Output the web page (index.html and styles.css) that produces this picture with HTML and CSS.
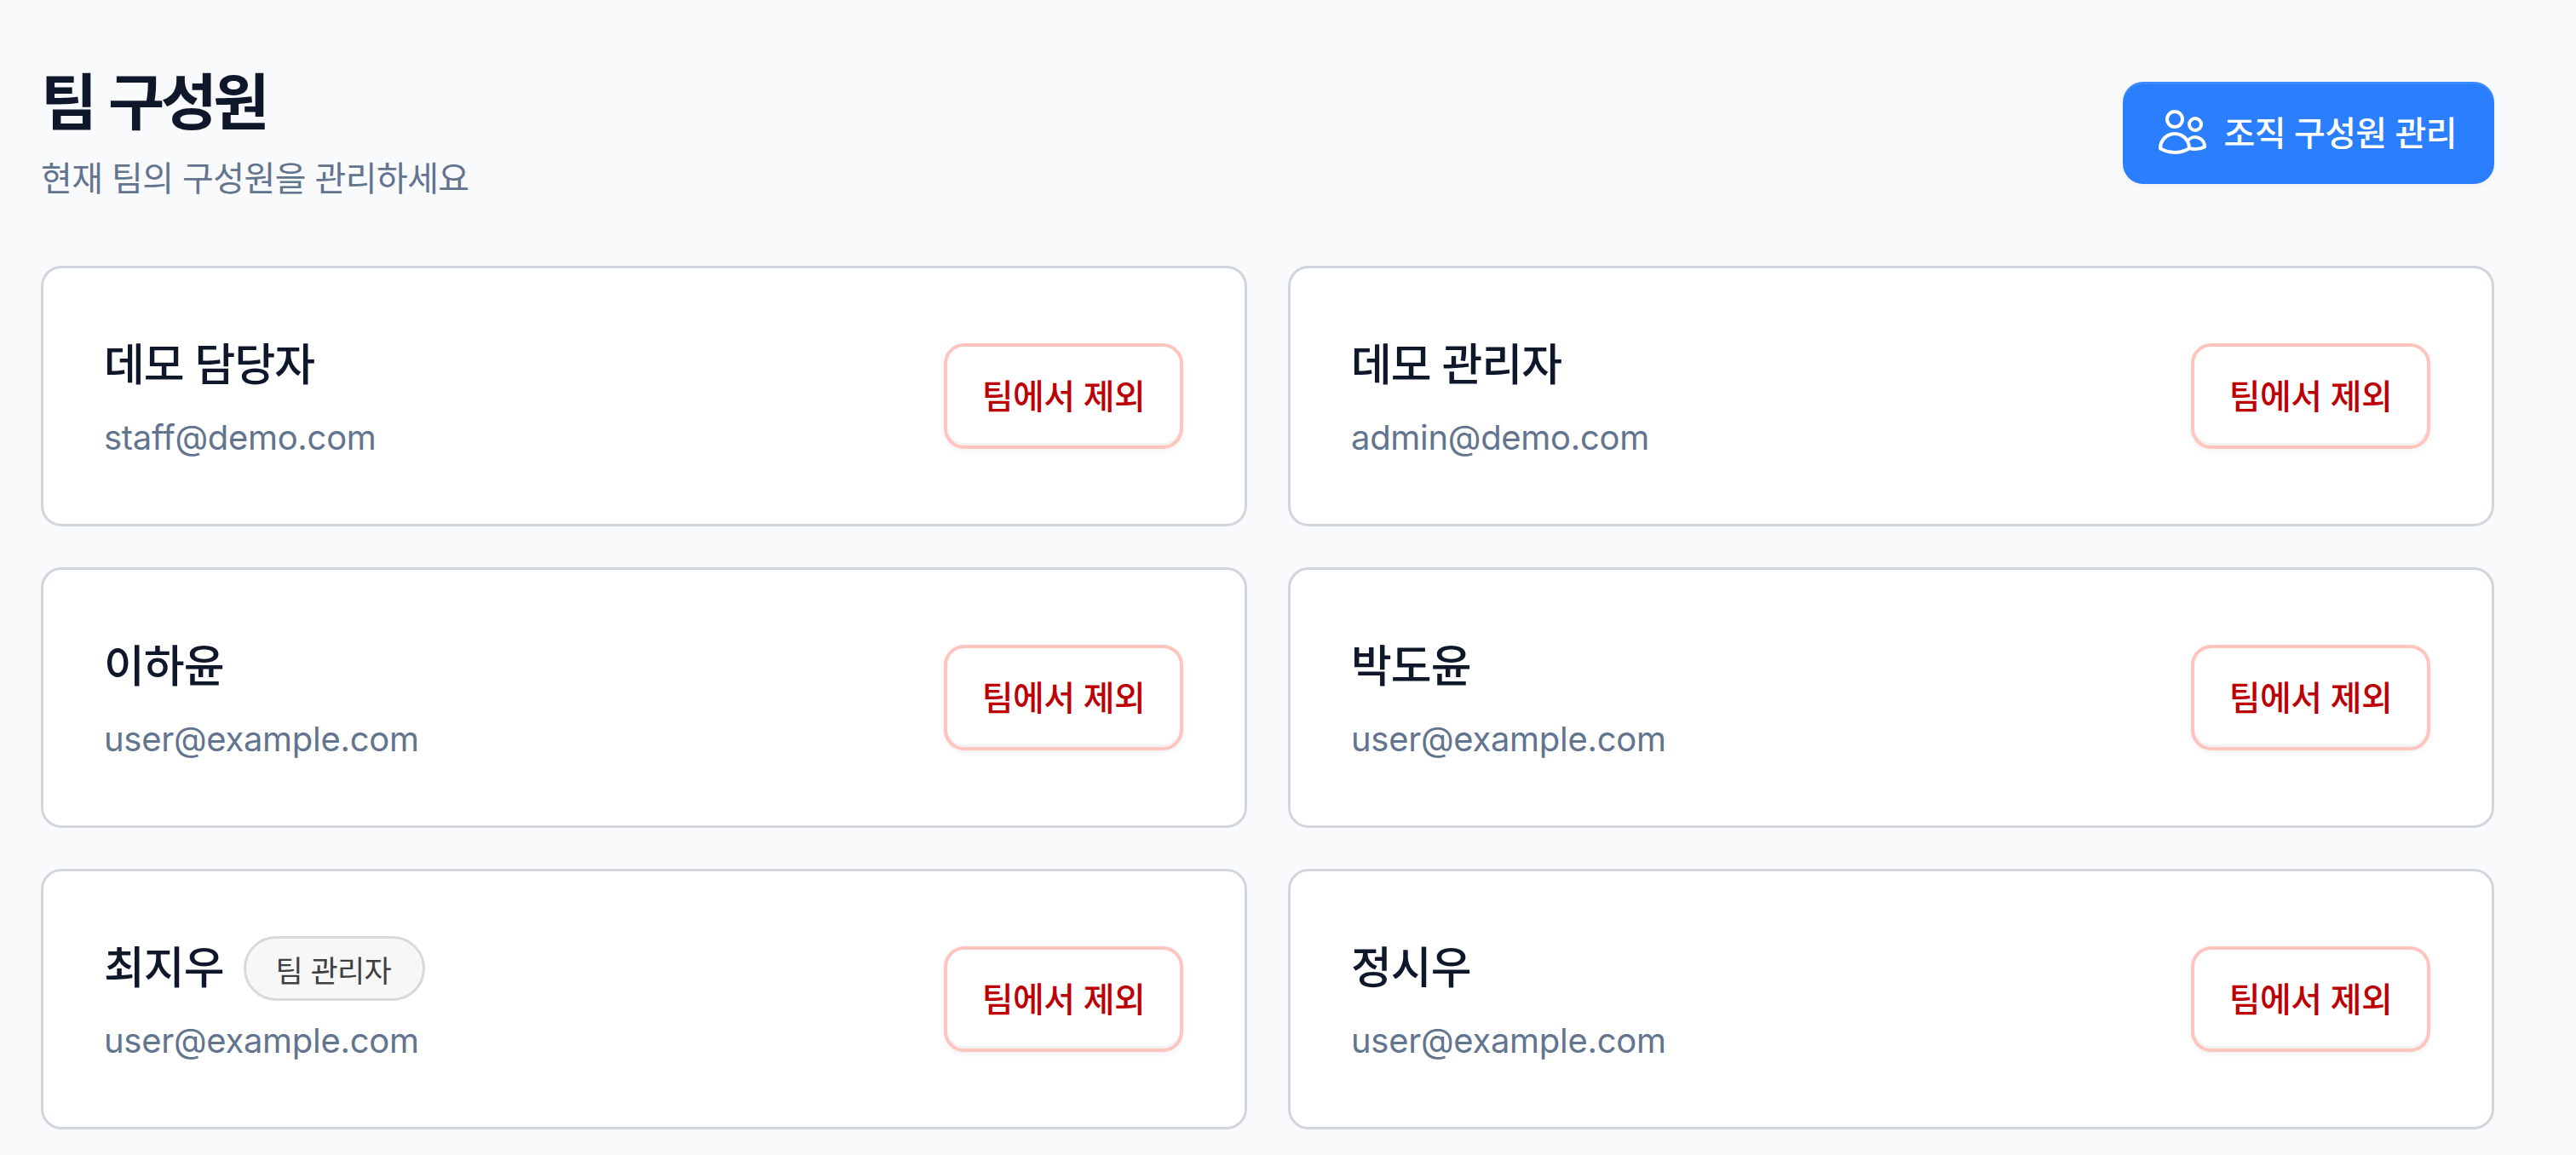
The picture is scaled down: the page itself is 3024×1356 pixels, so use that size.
FILE: index.html
```html
<!DOCTYPE html>
<html lang="ko">
<head>
    <meta charset="UTF-8">
    <meta name="viewport" content="width=device-width, initial-scale=1.0">
    <title>팀 구성원</title>
    <link rel="stylesheet" href="styles.css">
</head>
<body>
    <div class="container">
        <div class="header">
            <div>
                <h1>팀 구성원</h1>
                <p class="subtitle">현재 팀의 구성원을 관리하세요</p>
            </div>
            <button class="btn-primary">
                <svg class="icon" viewBox="0 0 24 24" fill="none" stroke="currentColor" stroke-width="1.5" stroke-linecap="round" stroke-linejoin="round">
                    <path d="M15 19.128a9.38 9.38 0 0 0 2.625.372 9.337 9.337 0 0 0 4.121-.952 4.125 4.125 0 0 0-7.533-2.493M15 19.128v-.003c0-1.113-.285-2.16-.786-3.07M15 19.128v.106A12.318 12.318 0 0 1 8.624 21c-2.331 0-4.512-.645-6.374-1.766l-.001-.109a6.375 6.375 0 0 1 11.964-3.07M12 6.375a3.375 3.375 0 1 1-6.75 0 3.375 3.375 0 0 1 6.75 0Zm8.25 2.25a2.625 2.625 0 1 1-5.25 0 2.625 2.625 0 0 1 5.25 0Z"/>
                </svg>
                조직 구성원 관리
            </button>
        </div>
        <div class="member-grid">
            <div class="card">
                <div class="member-info">
                    <div class="name-row"><span class="name">데모 담당자</span></div>
                    <div class="email">staff@demo.com</div>
                </div>
                <button class="btn-remove">팀에서 제외</button>
            </div>
            <div class="card">
                <div class="member-info">
                    <div class="name-row"><span class="name">데모 관리자</span></div>
                    <div class="email">admin@demo.com</div>
                </div>
                <button class="btn-remove">팀에서 제외</button>
            </div>
            <div class="card">
                <div class="member-info">
                    <div class="name-row"><span class="name">이하윤</span></div>
                    <div class="email">user@example.com</div>
                </div>
                <button class="btn-remove">팀에서 제외</button>
            </div>
            <div class="card">
                <div class="member-info">
                    <div class="name-row"><span class="name">박도윤</span></div>
                    <div class="email">user@example.com</div>
                </div>
                <button class="btn-remove">팀에서 제외</button>
            </div>
            <div class="card">
                <div class="member-info">
                    <div class="name-row"><span class="name">최지우</span><span class="badge">팀 관리자</span></div>
                    <div class="email">user@example.com</div>
                </div>
                <button class="btn-remove">팀에서 제외</button>
            </div>
            <div class="card">
                <div class="member-info">
                    <div class="name-row"><span class="name">정시우</span></div>
                    <div class="email">user@example.com</div>
                </div>
                <button class="btn-remove">팀에서 제외</button>
            </div>
        </div>
    </div>
</body>
</html>
```

FILE: styles.css
```css
:root {
    --bg-color: #f8fafc;
    --title-color: #0f172b;
    --muted-color: #62748e;
    --border-color: #d1d5dc;
}

body {
    font-family: Inter, "Noto Sans CJK KR", sans-serif;
    background: var(--bg-color);
    color: var(--title-color);
    margin: 0;
}

.container {
    padding: 72px 96px 30px 48px;
}

.header {
    display: flex;
    align-items: center;
    justify-content: space-between;
    margin-bottom: 72px;
}

.header h1 {
    font-size: 72px;
    line-height: 96px;
    font-weight: 700;
    letter-spacing: -4.6px;
    word-spacing: 5px;
    margin: 0;
}

.subtitle {
    font-size: 40px;
    line-height: 56px;
    letter-spacing: -0.6px;
    color: var(--muted-color);
    margin: 14px 0 2px;
}

.btn-primary {
    display: flex;
    align-items: center;
    gap: 16px;
    height: 120px;
    padding: 0 44px 4px 38px;
    background: #2b7fff;
    color: white;
    border: none;
    border-radius: 24px;
    font-family: inherit;
    font-size: 40px;
    font-weight: 500;
    letter-spacing: -0.6px;
    box-shadow: 0 2px 6px rgba(0, 0, 0, 0.05), inset 0 3px 0 rgba(255, 255, 255, 0.08);
}

.icon {
    width: 64px;
    height: 64px;
    margin-top: 2px;
}

.member-grid {
    display: grid;
    grid-template-columns: repeat(2, 1fr);
    gap: 48px;
}

.card {
    display: flex;
    align-items: center;
    justify-content: space-between;
    box-sizing: border-box;
    height: 306px;
    padding: 0 72px 0 71px;
    background: white;
    border: 3px solid var(--border-color);
    border-radius: 24px;
}

.member-info {
    margin-bottom: 4px;
}

.name-row {
    display: flex;
    align-items: center;
    gap: 23px;
    min-height: 80px;
}

.name {
    font-size: 52px;
    font-weight: 500;
    letter-spacing: -1px;
}

.email {
    font-size: 40px;
    line-height: 56px;
    letter-spacing: -0.3px;
    color: var(--muted-color);
    margin-top: 22px;
}

.badge {
    display: flex;
    align-items: center;
    height: 76px;
    box-sizing: border-box;
    margin: 5px 0 -5px;
    padding: 0 37px 0 35px;
    background: #f7f7f7;
    border: 3px solid #d9d9d9;
    border-radius: 40px;
    font-size: 35px;
    letter-spacing: -0.6px;
    color: #404040;
}

.btn-remove {
    width: 281px;
    height: 124px;
    padding: 0 0 4px;
    background: white;
    color: #bd0006;
    border: 4px solid #ffc4be;
    border-radius: 24px;
    font-family: inherit;
    font-size: 40px;
    font-weight: 500;
    letter-spacing: -0.5px;
    box-shadow: 0 3px 6px rgba(0, 0, 0, 0.05), inset 0 -3px 0 rgba(0, 0, 0, 0.05);
}
```
